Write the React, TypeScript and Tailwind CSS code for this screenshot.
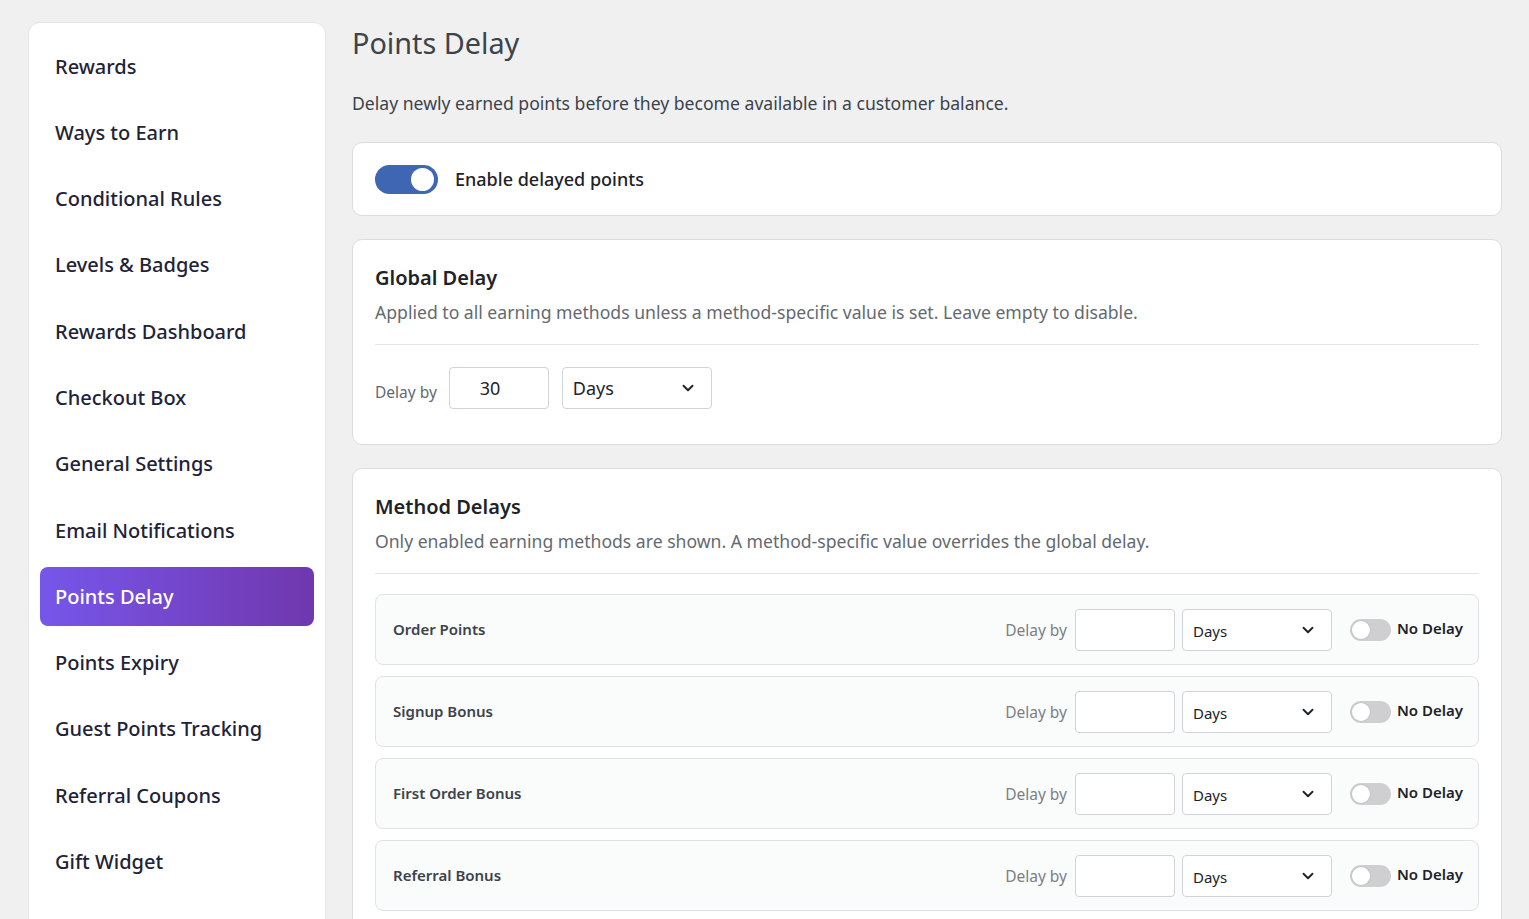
import React from "react";
import {ChevronDown} from "lucide-react";

const navItems = [
  "Rewards",
  "Ways to Earn",
  "Conditional Rules",
  "Levels & Badges",
  "Rewards Dashboard",
  "Checkout Box",
  "General Settings",
  "Email Notifications",
  "Points Delay",
  "Points Expiry",
  "Guest Points Tracking",
  "Referral Coupons",
  "Gift Widget",
];

const methods = ["Order Points", "Signup Bonus", "First Order Bonus", "Referral Bonus"];

function Toggle({on, small}: {on?: boolean; small?: boolean}) {
  if (small) {
    return (
      <div className="relative h-[22px] w-[41px] shrink-0 rounded-full bg-[#cfcfd1]">
        <div className="absolute left-[2px] top-[2px] h-[18px] w-[18px] rounded-full bg-white shadow-[0_0_0_1px_#c4c4c6]" />
      </div>
    );
  }
  return (
    <div className={`relative h-[29px] w-[63px] shrink-0 rounded-full ${on ? "bg-[#3f66b3]" : "bg-[#cfcfd1]"}`}>
      <div className="absolute right-[4px] top-[3px] h-[23px] w-[23px] rounded-full bg-white" />
    </div>
  );
}

function DaysSelect({big}: {big?: boolean}) {
  return (
    <div
      className={`flex h-[42px] w-[150px] items-center justify-between rounded-[4px] border border-[#d0d3d8] bg-white pl-[10px] pr-[14px] text-[#1d2327] ${
        big ? "text-[18px]" : "text-[15px] pt-[3px]"
      }`}
    >
      <span>Days</span>
      <ChevronDown size={18} strokeWidth={2.5} className={big ? "" : "-mt-[3px]"} />
    </div>
  );
}

function SectionHeader({title, text}: {title: string; text: string}) {
  return (
    <div className="border-b border-[#e3e5e8] pb-[19px]">
      <h2 className="text-[20px] font-semibold leading-[32px] text-[#1d2327]">{title}</h2>
      <p className="mt-[5px] text-[17.6px] leading-[26px] text-[#646970]">{text}</p>
    </div>
  );
}

export default function App() {
  return (
    <div
      className="flex min-h-[919px] gap-[26px] bg-[#f0f0f1] pl-[28px] pr-[27px] pt-[22px]"
      style={{fontFamily: '"Noto Sans", "Open Sans", sans-serif'}}
    >
      <aside className="w-[298px] shrink-0 rounded-t-[12px] border border-[#e4e4ea] bg-white px-[11px] pb-[40px] pt-[14px]">
        <nav className="flex flex-col gap-[7.3px]">
          {navItems.map((item) =>
            item === "Points Delay" ? (
              <div
                key={item}
                className="flex h-[59px] items-center rounded-[8px] bg-gradient-to-r from-[#7656ea] to-[#7037ae] px-[15px] text-[20px] font-medium text-white"
              >
                {item}
              </div>
            ) : (
              <div key={item} className="flex h-[59px] items-center px-[15px] text-[20px] font-medium text-[#1e2337]">
                {item}
              </div>
            )
          )}
        </nav>
      </aside>

      <main className="flex-1 pt-[1px]">
        <h1 className="text-[28.8px] leading-[40px] text-[#3c434a]">Points Delay</h1>
        <p className="mt-[27px] text-[17.6px] leading-[26px] text-[#3c434a]">
          Delay newly earned points before they become available in a customer balance.
        </p>

        <section className="mt-[26px] flex h-[74px] items-center gap-[17px] rounded-[10px] border border-[#dcdcde] bg-white px-[22px]">
          <Toggle on />
          <span className="text-[18px] font-medium text-[#1d2327]">Enable delayed points</span>
        </section>

        <section className="mt-[23px] rounded-[10px] border border-[#dcdcde] bg-white px-[22px] pb-[35px] pt-[22px]">
          <SectionHeader
            title="Global Delay"
            text="Applied to all earning methods unless a method-specific value is set. Leave empty to disable."
          />
          <div className="mt-[22px] flex items-center">
            <span className="mt-[10px] text-[15.5px] text-[#646970]">Delay by</span>
            <input
              defaultValue="30"
              className="ml-[12px] h-[42px] w-[100px] rounded-[4px] border border-[#d0d3d8] bg-white pl-[30px] text-[18px] text-[#1d2327] outline-none"
            />
            <div className="ml-[13px]">
              <DaysSelect big />
            </div>
          </div>
        </section>

        <section className="mt-[23px] rounded-t-[10px] border border-[#dcdcde] bg-white px-[22px] pb-[30px] pt-[22px]">
          <SectionHeader
            title="Method Delays"
            text="Only enabled earning methods are shown. A method-specific value overrides the global delay."
          />
          <div className="mt-[20px] flex flex-col gap-[11px]">
            {methods.map((m) => (
              <div
                key={m}
                className="flex h-[71px] items-center rounded-[8px] border border-[#dfe1e5] bg-[#fafbfb] pl-[17px] pr-[15px]"
              >
                <span className="flex-1 text-[15px] font-semibold text-[#3c434a]">{m}</span>
                <span className="mt-[2px] text-[15.5px] text-[#7a7f85]">Delay by</span>
                <input className="ml-[8px] h-[42px] w-[100px] rounded-[4px] border border-[#d0d3d8] bg-white outline-none" />
                <div className="ml-[7px]">
                  <DaysSelect />
                </div>
                <div className="ml-[18px] flex items-center gap-[6px]">
                  <Toggle small />
                  <span className="-mt-[3px] text-[15px] font-semibold text-[#1d2327]">No Delay</span>
                </div>
              </div>
            ))}
          </div>
        </section>
      </main>
    </div>
  );
}
